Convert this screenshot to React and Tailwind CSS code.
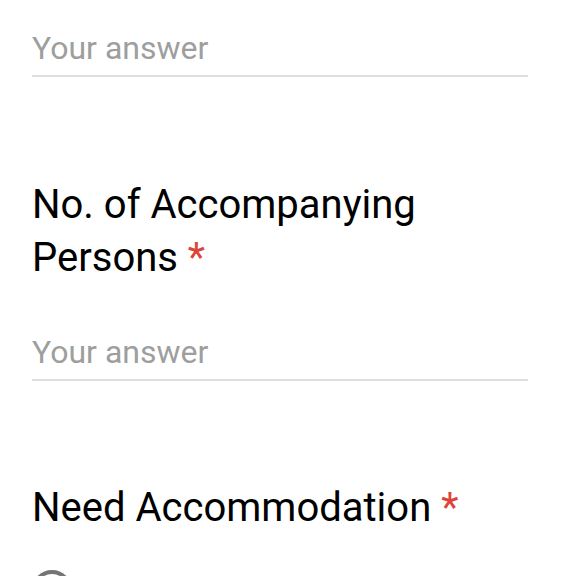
import React from 'react';

const font = { fontFamily: 'Roboto, "Noto Sans", sans-serif' };

const AnswerField = ({ className = '' }) => (
  <div className={`border-b-2 border-[#e0e0e0] pb-[7px] ${className}`}>
    <span className="block text-[32px] leading-[40px] text-[#9e9e9e]">Your answer</span>
  </div>
);

const Question = ({ title, className = '' }) => (
  <h2 className={`text-[40px] leading-[53px] font-normal text-black pr-10 ${className}`}>
    {title}
    {' '}
    <span className="text-[#db4437]">*</span>
  </h2>
);

export default function App() {
  return (
    <div className="w-[576px] h-[576px] overflow-hidden bg-white" style={font}>
      <div className="pl-8 pr-12 pt-[28px]">
        <AnswerField />
        <Question title="No. of Accompanying Persons" className="mt-[101px] w-[430px]" />
        <AnswerField className="mt-[48px]" />
        <Question title="Need Accommodation" className="mt-[100px]" />
        <div className="mt-[36px] flex items-center gap-4">
          <div className="w-[40px] h-[40px] rounded-full border-[4px] border-[#757575]" />
        </div>
      </div>
    </div>
  );
}
